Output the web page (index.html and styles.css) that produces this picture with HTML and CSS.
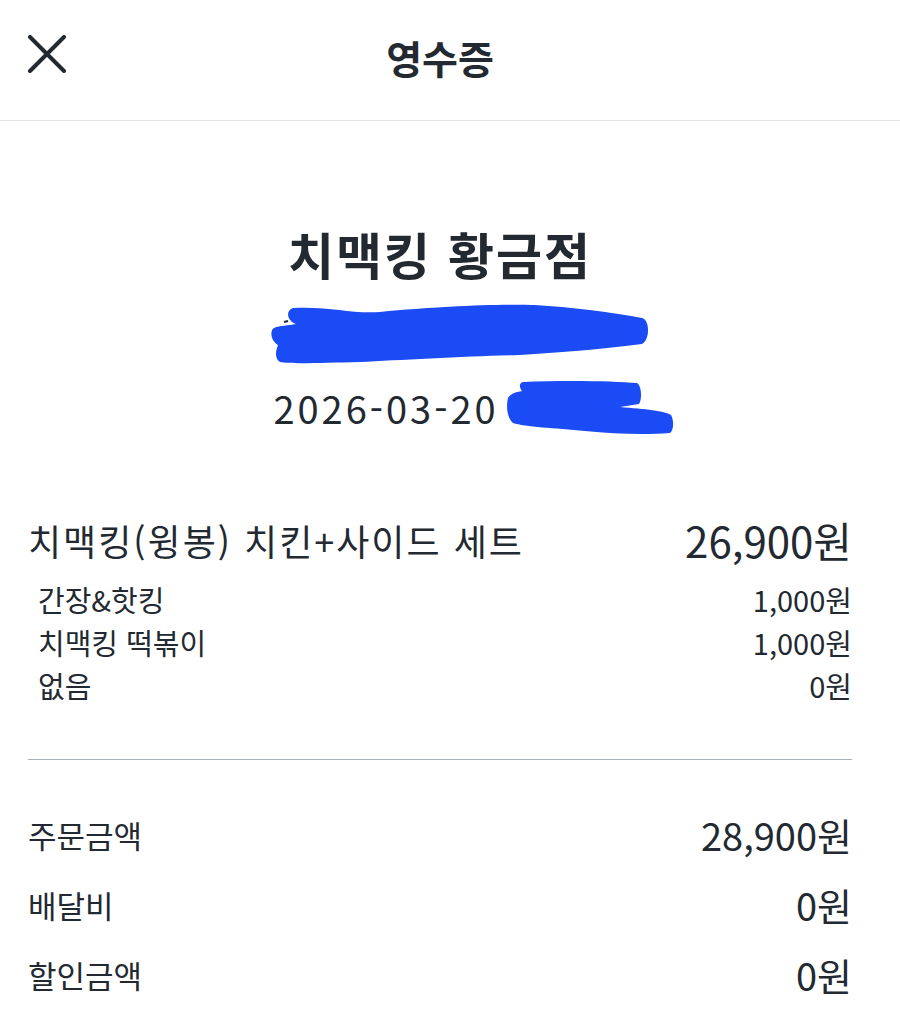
FILE: index.html
```html
<!DOCTYPE html>
<html lang="ko">
<head>
    <meta charset="UTF-8">
    <meta name="viewport" content="width=device-width, initial-scale=1.0">
    <title>영수증</title>
    <link rel="stylesheet" href="styles.css">
</head>
<body>
    <header class="top-bar">
        <button class="close-btn" aria-label="닫기">
            <svg width="40" height="38" viewBox="0 0 40 38">
                <path d="M3 2 L37 36 M37 2 L3 36" stroke="#232931" stroke-width="4" stroke-linecap="round" fill="none"/>
            </svg>
        </button>
        <h1 class="top-title">영수증</h1>
    </header>

    <section class="store">
        <h2 class="store-name">치맥킹 황금점</h2>
        <svg class="mask-address" width="382" height="66" viewBox="0 0 382 66">
            <path d="M14 22 L18 21" stroke="#232931" stroke-width="2"/>
            <path d="M23 8 C60 6 80 14 110 12 C170 6 230 4 265 5 C300 7 340 12 372 18 C380 20 380 40 372 44 C340 48 300 52 250 55 C200 56 130 60 90 62 C50 63 20 64 10 62 C4 58 6 50 8 45 C0 40 0 30 4 28 C10 25 18 26 26 24 C16 20 16 10 23 8 Z" fill="#1a4bf5"/>
        </svg>
        <div class="date-row">
            <span class="date">2026-03-20</span>
            <svg class="mask-time" width="170" height="60" viewBox="0 0 170 60">
                <path d="M18 4 C60 2 110 3 132 5 C137 8 137 22 134 26 L115 29 C140 31 160 33 166 37 C169 42 169 52 165 55 C140 57 110 56 80 53 C50 50 20 49 8 45 C2 40 1 28 3 20 C6 15 12 14 17 13 C14 9 14 5 18 4 Z" fill="#1a4bf5"/>
            </svg>
        </div>
    </section>

    <section class="items">
        <div class="row item-main">
            <span class="item-name">치맥킹(윙봉) 치킨+사이드 세트</span>
            <span class="price-lg">26,900원</span>
        </div>
        <div class="row option">
            <span>간장&amp;핫킹</span>
            <span>1,000원</span>
        </div>
        <div class="row option">
            <span>치맥킹 떡볶이</span>
            <span>1,000원</span>
        </div>
        <div class="row option">
            <span>없음</span>
            <span>0원</span>
        </div>
    </section>

    <hr class="divider">

    <section class="totals">
        <div class="row total">
            <span>주문금액</span>
            <span class="price-md">28,900원</span>
        </div>
        <div class="row total">
            <span>배달비</span>
            <span class="price-md">0원</span>
        </div>
        <div class="row total">
            <span>할인금액</span>
            <span class="price-md">0원</span>
        </div>
    </section>
</body>
</html>
```

FILE: styles.css
```css
body {
    margin: 0;
    font-family: "Noto Sans CJK KR", "Noto Sans", sans-serif;
    background: #fff;
    color: #232931;
}
.top-bar {
    position: relative;
    height: 120px;
    display: flex;
    align-items: center;
    justify-content: center;
    border-bottom: 1px solid #e2e4e6;
}
.close-btn {
    position: absolute;
    left: 27px;
    top: 35px;
    padding: 0;
    border: none;
    background: none;
    line-height: 0;
}
.top-title {
    margin: 0 20px 0 0;
    font-size: 39px;
    font-weight: 700;
    line-height: 1;
    padding-bottom: 6px;
}
.store {
    display: flex;
    flex-direction: column;
    align-items: center;
    padding: 102px 20px 0 0;
}
.store-name {
    margin: 0;
    font-size: 50px;
    font-weight: 700;
    line-height: 60px;
    letter-spacing: 2px;
}
.mask-address {
    margin-top: 17px;
    margin-left: 42px;
}
.date-row {
    display: flex;
    align-items: center;
    margin-top: 12px;
}
.date {
    font-size: 38px;
    line-height: 44px;
    letter-spacing: 3px;
}
.mask-time {
    margin-left: 6px;
    margin-right: -68px;
}
.items {
    padding: 78px 48px 0 28px;
}
.row {
    display: flex;
    justify-content: space-between;
    align-items: center;
}
.item-main {
    font-size: 36px;
    line-height: 48px;
    margin-bottom: 14px;
}
.item-name {
    letter-spacing: 2px;
}
.price-lg {
    font-size: 42px;
}
.option {
    font-size: 29px;
    line-height: 43px;
    padding-left: 10px;
}
.divider {
    margin: 52px 48px 0 28px;
    border: none;
    border-top: 1px solid #a7b1b9;
}
.totals {
    padding: 40px 48px 0 28px;
}
.total {
    font-size: 31px;
    line-height: 70px;
}
.price-md {
    font-size: 38px;
}
```
